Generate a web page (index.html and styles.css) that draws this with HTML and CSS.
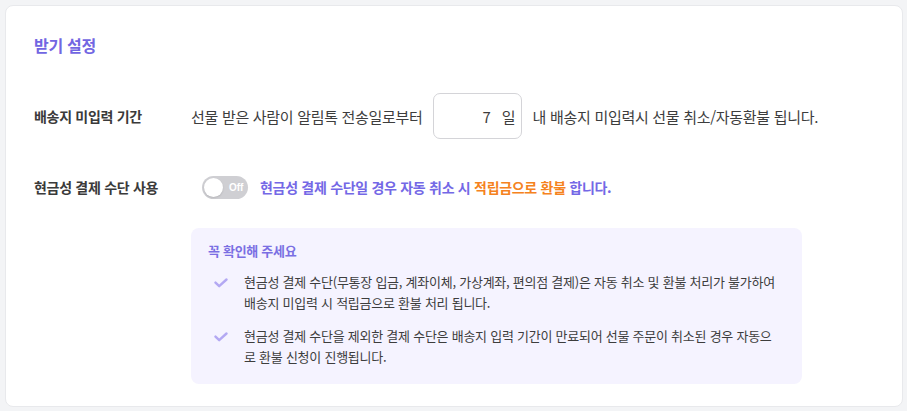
FILE: index.html
```html
<!DOCTYPE html>
<html lang="ko">
<head>
<meta charset="utf-8">
<link rel="stylesheet" href="styles.css">
</head>
<body>
<div class="card">
  <h2 class="title">받기 설정</h2>
  <div class="row row-period">
    <div class="label">배송지 미입력 기간</div>
    <div class="content">
      <span class="text">선물 받은 사람이 알림톡 전송일로부터</span>
      <div class="day-input"><span class="num">7</span><span class="unit">일</span></div>
      <span class="text">내 배송지 미입력시 선물 취소/자동환불 됩니다.</span>
    </div>
  </div>
  <div class="row row-cash">
    <div class="label">현금성 결제 수단 사용</div>
    <div class="content">
      <div class="toggle"><span class="knob"></span><span class="off">Off</span></div>
      <span class="notice-text">현금성 결제 수단일 경우 자동 취소 시 <em>적립금으로 환불</em> 합니다.</span>
    </div>
  </div>
  <div class="notice">
    <div class="notice-title">꼭 확인해 주세요</div>
    <ul class="notice-list">
      <li>
        <svg class="check" width="14" height="10" viewBox="0 0 14 10"><path d="M1.5 4.6 L5.2 8.2 L12.5 1.5" fill="none" stroke="#b3a8f3" stroke-width="2.4" stroke-linecap="round" stroke-linejoin="round"/></svg>
        <p>현금성 결제 수단(무통장 입금, 계좌이체, 가상계좌, 편의점 결제)은 자동 취소 및 환불 처리가 불가하여<br>배송지 미입력 시 적립금으로 환불 처리 됩니다.</p>
      </li>
      <li>
        <svg class="check" width="14" height="10" viewBox="0 0 14 10"><path d="M1.5 4.6 L5.2 8.2 L12.5 1.5" fill="none" stroke="#b3a8f3" stroke-width="2.4" stroke-linecap="round" stroke-linejoin="round"/></svg>
        <p>현금성 결제 수단을 제외한 결제 수단은 배송지 입력 기간이 만료되어 선물 주문이 취소된 경우 자동으<br>로 환불 신청이 진행됩니다.</p>
      </li>
    </ul>
  </div>
</div>
</body>
</html>
```

FILE: styles.css
```css
* { box-sizing: border-box; }
html, body { margin: 0; padding: 0; }
body {
  background: #f3f4f6;
  font-family: "Noto Sans CJK KR", "Noto Sans", sans-serif;
  color: #333;
  padding: 5px 4px 4px 5px;
}
.card {
  background: #fff;
  border: 1px solid #e8e9ec;
  border-radius: 8px;
  height: 402px;
  padding: 28px 28px 0 28px;
}
.title {
  margin: 0;
  font-size: 16px;
  line-height: 22px;
  font-weight: 700;
  color: #7266e2;
  letter-spacing: -0.3px;
}
.row {
  display: flex;
  align-items: center;
}
.row-period { margin-top: 36px; height: 48px; }
.row-cash { margin-top: 35px; height: 24px; }
.label {
  width: 157px;
  flex: none;
  font-size: 14px;
  font-weight: 700;
  color: #3a3a3a;
  letter-spacing: -0.3px;
}
.content {
  display: flex;
  align-items: center;
}
.text {
  font-size: 15px;
  color: #3d3d3d;
  letter-spacing: -0.3px;
}
.day-input {
  width: 89px;
  height: 46px;
  border: 1px solid #d4d4d8;
  border-radius: 7px;
  margin: 0 11px 0 10px;
  display: flex;
  align-items: center;
  justify-content: flex-end;
  padding-right: 5px;
  font-size: 15px;
  color: #3d3d3d;
}
.day-input .num { margin-right: 11px; }
.toggle {
  width: 46px;
  height: 23px;
  border-radius: 12px;
  background: #cfcfd3;
  margin-left: 11px;
  margin-right: 12px;
  display: flex;
  align-items: center;
  padding: 0 2px;
}
.knob {
  width: 19px;
  height: 19px;
  border-radius: 50%;
  background: #fff;
  box-shadow: 0 1px 2px rgba(0,0,0,0.12);
}
.off {
  font-family: "Liberation Sans", sans-serif;
  font-size: 10px;
  font-weight: 700;
  color: #fff;
  margin-left: 6px;
}
.notice-text {
  font-size: 14px;
  font-weight: 700;
  color: #7468e6;
  letter-spacing: -0.3px;
}
.notice-text em {
  font-style: normal;
  color: #f58220;
}
.notice {
  margin: 29px 0 0 157px;
  width: 611px;
  background: #f5f3ff;
  border-radius: 8px;
  padding: 13px 17px 17px 17px;
}
.notice-title {
  font-size: 13px;
  line-height: 20px;
  font-weight: 700;
  color: #7a6fe3;
  letter-spacing: -0.3px;
}
.notice-list {
  list-style: none;
  margin: 10px 0 0 0;
  padding: 0;
}
.notice-list li {
  display: flex;
  align-items: flex-start;
}
.notice-list li + li { margin-top: 12px; }
.check {
  flex: none;
  margin: 7px 16px 0 6px;
}
.notice-list p {
  margin: 0;
  font-size: 13px;
  line-height: 21px;
  color: #3d3d3d;
  letter-spacing: -0.25px;
}
```
